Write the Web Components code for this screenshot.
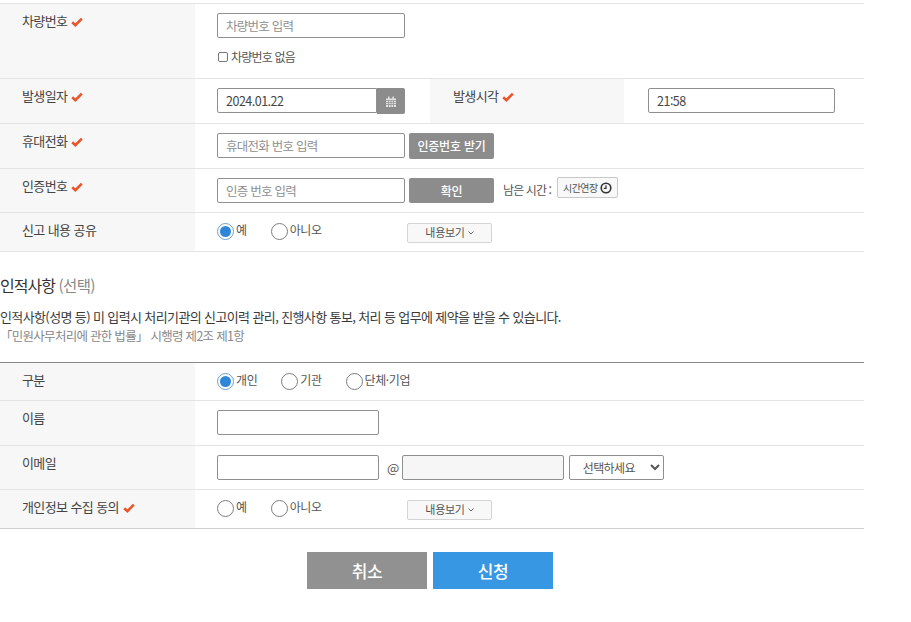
<!DOCTYPE html>
<html lang="ko"><head><meta charset="utf-8"><title>신고</title>
<style>
html,body{margin:0;background:#fff}
body{font-family:"Noto Sans CJK KR","Noto Sans",sans-serif;font-size:13px;color:#444;letter-spacing:-.6px;overflow:hidden}
main{display:block;width:864px;padding-top:3px}
.line{display:flex;align-items:flex-start}
.g4{gap:4px}.at{gap:6px;align-items:center}
</style></head><body>
<template id="t-row"><style>
:host{display:grid;grid-template-columns:195px 1fr;border-bottom:1px solid #e4e4e4;box-sizing:border-box}
.l{background:#f7f7f7;padding:7px 0 0 22px;line-height:20px;color:#444}
.c{padding:9px 0 0 22px;min-width:0}
:host([split]){grid-template-columns:195px 235px 194px 1fr}
:host([split]) #l2{padding-left:23px}
:host([split]) #c2{padding-left:24px}
:host([strong]){border-bottom-color:#cfcfcf}
</style><div class="l"><slot name="label"></slot></div><div class="c"><slot></slot></div><div class="l" id="l2"><slot name="label2"></slot></div><div class="c" id="c2"><slot name="value2"></slot></div></template>

<template id="t-check"><style>:host{display:inline-block;width:12px;height:10px;margin-left:4px;vertical-align:-1px}svg{display:block}</style>
<svg width="12" height="10" viewBox="0 0 12 10"><path d="M1.2 5.2 4.4 8.2 10.8 1.6" fill="none" stroke="#e8562a" stroke-width="2.6"/></svg></template>

<template id="t-input"><style>:host{display:inline-block;height:25px}
input{box-sizing:border-box;width:var(--w,188px);height:25px;display:block;border:1px solid #8f8f8f;border-radius:2px;padding:0 8px;font:12.5px/23px "Noto Sans CJK KR","Noto Sans",sans-serif;letter-spacing:-.5px;color:#444;background:var(--bg,#fff);outline:0}
input::placeholder{color:#8f8f8f;opacity:1;letter-spacing:-.75px}
:host([joined]) input{border-radius:2px 0 0 2px}
</style><input></template>

<template id="t-gbtn"><style>:host{display:inline-flex;align-items:center;justify-content:center;box-sizing:border-box;height:25px;width:85px;background:#8c8c8c;color:#fff;font-size:12px;font-weight:500;border-radius:2px;letter-spacing:-.2px;line-height:1}
:host([cal]){width:28px;border-radius:0 2px 2px 0;height:26px}</style><slot></slot></template>

<template id="t-radio"><style>:host{display:inline-flex;align-items:flex-start;font-size:12px;line-height:16px;color:#555;letter-spacing:-.4px}
i{box-sizing:border-box;width:17px;height:17px;margin:0 2px 0 0;border-radius:50%;border:1px solid #7d7d7d;background:#fff;display:flex;align-items:center;justify-content:center;flex:none}
i b{display:none;width:11px;height:11px;border-radius:50%;background:#2f86d9}
:host([on]) i{border-color:#6f9fca}
:host([on]) i b{display:block}
span{margin-top:-1px}
</style><i><b></b></i><span><slot></slot></span></template>

<template id="t-radios"><style>:host{display:flex;align-items:flex-start;padding-top:1px;gap:24px}</style><slot></slot></template>

<template id="t-more"><style>:host{display:inline-flex;align-items:center;justify-content:center;gap:3px;box-sizing:border-box;width:85px;height:20px;padding-bottom:1px;background:#f8f8f8;border:1px solid #d4d4d4;border-radius:2px;font-size:11px;color:#555;letter-spacing:-.3px;line-height:1}
svg{display:block}</style><slot></slot><svg width="6" height="4" viewBox="0 0 6 4"><path d="M.5.5 3 3 5.500.5" fill="none" stroke="#666" stroke-width="1"/></svg></template>

<template id="t-extend"><style>:host{display:inline-flex;align-items:center;gap:2px;box-sizing:border-box;width:61px;height:21px;padding-left:5px;background:#f8f8f8;border:1px solid #c8c8c8;border-radius:2px;font-size:10px;color:#555;letter-spacing:-.5px;line-height:1}
svg{display:block;flex:none}</style><slot></slot><svg width="12" height="12" viewBox="0 0 12 12"><circle cx="6" cy="6" r="4.8" fill="none" stroke="#333" stroke-width="1.6"/><path d="M6 3.2V6.300H3.800" fill="none" stroke="#333" stroke-width="1.200"/></svg></template>

<template id="t-heading"><style>:host{display:block;padding:22px 0 0;font-size:16px;line-height:22px;color:#333;letter-spacing:-1px}
.d{margin-top:11px;font-size:13px;line-height:19px;color:#3a3a3a;letter-spacing:-.62px}
.n{color:#888;font-size:12.5px;letter-spacing:-.72px}</style><div><slot name="title"></slot></div><div class="d"><slot name="desc"></slot><div class="n"><slot name="note"></slot></div></div></template>

<template id="t-action"><style>:host{display:flex;align-items:center;justify-content:center;width:120px;height:37px;background:#919191;color:#fff;font-size:17px;font-weight:500;letter-spacing:-.4px;line-height:1}
:host([primary]){background:#3897e3}</style><slot></slot></template>

<template id="t-actions"><style>:host{display:flex;justify-content:center;gap:6px;width:860px;margin-top:23px}</style><slot></slot></template>

<template id="t-table"><style>:host{display:block;border-top:1px solid #e4e4e4}:host([dark]){border-top-color:#888}</style><slot></slot></template>

<main>
<x-table>
 <x-row style="height:75px"><span slot="label">차량번호<x-check></x-check></span>
  <x-input placeholder="차량번호 입력"></x-input>
  <div style="display:flex;align-items:center;gap:3px;margin-top:10px;font-size:12px;line-height:18px;color:#555;letter-spacing:-.8px"><span style="box-sizing:border-box;width:10px;height:10px;margin-left:1px;border:1px solid #777;border-radius:2px;display:block"></span>차량번호 없음</div>
 </x-row>
 <x-row split style="height:45px"><span slot="label">발생일자<x-check></x-check></span>
  <div class="line"><x-input joined value="2024.01.22" style="--w:160px"></x-input><x-gbtn cal><svg width="10" height="11" viewBox="0 0 10 11"><path fill="#e2e2e2" d="M0 2.500h10V11H0zM2 .5h1.500V3H2zM6.500.5H8V3H6.500z"/><path stroke="#8c8c8c" stroke-width=".7" d="M0 4.500h10M0 6.500h10M0 8.500h10M2.500 4.500V11M5 4.500V11M7.500 4.500V11"/></svg></x-gbtn></div>
  <span slot="label2">발생시각<x-check></x-check></span>
  <x-input slot="value2" value="21:58" style="--w:187px"></x-input>
 </x-row>
 <x-row style="height:45px"><span slot="label">휴대전화<x-check></x-check></span>
  <div class="line g4"><x-input placeholder="휴대전화 번호 입력"></x-input><x-gbtn style="height:26px">인증번호 받기</x-gbtn></div>
 </x-row>
 <x-row style="height:44px"><span slot="label">인증번호<x-check></x-check></span>
  <div class="line g4"><x-input placeholder="인증 번호 입력"></x-input><x-gbtn>확인</x-gbtn>
   <span style="margin:2px 0 0 5px;font-size:12px;line-height:20px;color:#555;letter-spacing:-.9px">남은 시간 :</span><x-extend style="margin:-1px 0 0 2px">시간연장</x-extend></div>
 </x-row>
 <x-row style="height:39px"><span slot="label">신고 내용 공유</span>
  <div class="line"><x-radios style="width:190px"><x-radio on>예</x-radio><x-radio>아니오</x-radio></x-radios><x-more style="margin-top:1px">내용보기</x-more></div>
 </x-row>
</x-table>

<x-heading><span slot="title">인적사항 <span style="font-size:15.5px;color:#888;letter-spacing:-.6px">(선택)</span></span>
 <span slot="desc">인적사항(성명 등) 미 입력시 처리기관의 신고이력 관리, 진행사항 통보, 처리 등 업무에 제약을 받을 수 있습니다.</span>
 <span slot="note">「민원사무처리에 관한 법률」 시행령 제2조 제1항</span></x-heading>

<x-table dark style="margin-top:17px">
 <x-row style="height:38px"><span slot="label">구분</span>
  <x-radios><x-radio on>개인</x-radio><x-radio>기관</x-radio><x-radio>단체·기업</x-radio></x-radios>
 </x-row>
 <x-row style="height:45px"><span slot="label">이름</span><x-input style="--w:162px"></x-input></x-row>
 <x-row style="height:44px"><span slot="label">이메일</span>
  <div class="line at"><x-input style="--w:162px"></x-input><span style="margin:0 -3px 0 2px;font-size:13px;color:#555">@</span><x-input style="--w:162px;--bg:#f6f6f6"></x-input><x-select style="margin-left:-1px"></x-select></div>
 </x-row>
 <x-row strong style="height:39px"><span slot="label">개인정보 수집 동의<x-check></x-check></span>
  <div class="line"><x-radios style="width:190px"><x-radio>예</x-radio><x-radio>아니오</x-radio></x-radios><x-more style="margin-top:1px">내용보기</x-more></div>
 </x-row>
</x-table>

<x-actions><x-action>취소</x-action><x-action primary>신청</x-action></x-actions>
</main>

<template id="t-select"><style>:host{display:inline-block;height:25px}
select{box-sizing:border-box;width:95px;height:25px;display:block;border:1px solid #8f8f8f;border-radius:2px;background:#fff;padding:0 0 0 9px;font:12px "Noto Sans CJK KR","Noto Sans",sans-serif;letter-spacing:-.6px;color:#555;outline:0}</style><select><option>선택하세요</option></select></template>

<script>
function def(tag,tid,setup){customElements.define(tag,class extends HTMLElement{
 constructor(){super();const r=this.attachShadow({mode:"open"});r.appendChild(document.getElementById(tid).content.cloneNode(true));}
 connectedCallback(){if(setup)setup(this,this.shadowRoot);}
});}
def("x-table","t-table");
def("x-row","t-row",(h,r)=>{if(!h.hasAttribute("split")){r.getElementById("l2")?.remove();r.getElementById("c2")?.remove();}});
def("x-check","t-check");
def("x-input","t-input",(h,r)=>{const i=r.querySelector("input");
 if(h.hasAttribute("placeholder"))i.placeholder=h.getAttribute("placeholder");
 if(h.hasAttribute("value"))i.value=h.getAttribute("value");});
def("x-gbtn","t-gbtn");
def("x-radio","t-radio");
def("x-radios","t-radios");
def("x-more","t-more");
def("x-extend","t-extend");
def("x-heading","t-heading");
def("x-action","t-action");
def("x-actions","t-actions");
def("x-select","t-select");
</script>
</body></html>
